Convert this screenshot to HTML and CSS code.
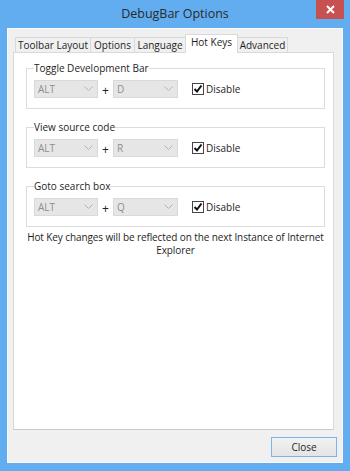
FILE: index.html
```html
<!DOCTYPE html>
<html lang="en">
<head>
  <meta charset="UTF-8">
  <title>DebugBar Options</title>
  <link rel="stylesheet" href="styles.css">
</head>
<body>
<div class="window">
  <div class="titlebar">
    <span></span>
    <div class="title">DebugBar Options</div>
    <div class="close-x">
      <svg width="9" height="9" viewBox="0 0 9 9"><path d="M1 1 L8 8 M8 1 L1 8" stroke="#fff" stroke-width="2"/></svg>
    </div>
  </div>

  <div class="client">
    <div class="tabs">
      <div class="tab t1">Toolbar Layout</div>
      <div class="tab t2">Options</div>
      <div class="tab t3">Language</div>
      <div class="tab t4 active">Hot Keys</div>
      <div class="tab t5">Advanced</div>
    </div>

    <div class="panel">
      <fieldset class="group">
        <legend>Toggle Development Bar</legend>
        <div class="keys">
          <div class="combo">ALT<svg class="chev" width="9" height="6" viewBox="0 0 9 6"><path d="M0.5 0.5 L4.5 4.5 L8.5 0.5" fill="none" stroke="#b4b4b4"/></svg></div>
          <span class="plus">+</span>
          <div class="combo key">D<svg class="chev" width="9" height="6" viewBox="0 0 9 6"><path d="M0.5 0.5 L4.5 4.5 L8.5 0.5" fill="none" stroke="#b4b4b4"/></svg></div>
          <label class="check"><span class="box"><svg width="10" height="10" viewBox="0 0 10 10"><path d="M1.5 5 L4 7.5 L8.5 1.5" fill="none" stroke="#111" stroke-width="2"/></svg></span>Disable</label>
        </div>
      </fieldset>

      <fieldset class="group">
        <legend>View source code</legend>
        <div class="keys">
          <div class="combo">ALT<svg class="chev" width="9" height="6" viewBox="0 0 9 6"><path d="M0.5 0.5 L4.5 4.5 L8.5 0.5" fill="none" stroke="#b4b4b4"/></svg></div>
          <span class="plus">+</span>
          <div class="combo key">R<svg class="chev" width="9" height="6" viewBox="0 0 9 6"><path d="M0.5 0.5 L4.5 4.5 L8.5 0.5" fill="none" stroke="#b4b4b4"/></svg></div>
          <label class="check"><span class="box"><svg width="10" height="10" viewBox="0 0 10 10"><path d="M1.5 5 L4 7.5 L8.5 1.5" fill="none" stroke="#111" stroke-width="2"/></svg></span>Disable</label>
        </div>
      </fieldset>

      <fieldset class="group last">
        <legend>Goto search box</legend>
        <div class="keys">
          <div class="combo">ALT<svg class="chev" width="9" height="6" viewBox="0 0 9 6"><path d="M0.5 0.5 L4.5 4.5 L8.5 0.5" fill="none" stroke="#b4b4b4"/></svg></div>
          <span class="plus">+</span>
          <div class="combo key">Q<svg class="chev" width="9" height="6" viewBox="0 0 9 6"><path d="M0.5 0.5 L4.5 4.5 L8.5 0.5" fill="none" stroke="#b4b4b4"/></svg></div>
          <label class="check"><span class="box"><svg width="10" height="10" viewBox="0 0 10 10"><path d="M1.5 5 L4 7.5 L8.5 1.5" fill="none" stroke="#111" stroke-width="2"/></svg></span>Disable</label>
        </div>
      </fieldset>

      <p class="note">Hot Key changes will be reflected on the next Instance of Internet Explorer</p>
    </div>

    <div class="button-row">
      <button class="close-btn">Close</button>
    </div>
  </div>
</div>
</body>
</html>
```

FILE: styles.css
```css
* {
  box-sizing: border-box;
}
body {
  margin: 0;
  font-family: "Open Sans", "Noto Sans", sans-serif;
  font-size: 10px;
  color: #1e1e1e;
}
.window {
  width: 350px;
  height: 471px;
  background-color: #62adf0;
  padding: 0 7px 8px 7px;
  display: flex;
  flex-direction: column;
}
.titlebar {
  height: 28px;
  display: grid;
  grid-template-columns: 1fr auto 1fr;
}
.title {
  align-self: center;
  font-size: 12.5px;
  color: #2a2a2a;
  margin-top: -1px;
}
.close-x {
  justify-self: end;
  width: 28px;
  height: 19px;
  margin-right: -1px;
  background-color: #c75050;
  display: flex;
  align-items: center;
  justify-content: center;
}
.client {
  flex: 1;
  background-color: #f0f0f0;
  border: 1px solid #f8f8f8;
  padding: 5px 5px 5px 5px;
  display: flex;
  flex-direction: column;
}
.tabs {
  display: flex;
  align-items: flex-end;
  padding-left: 2px;
  margin-bottom: -1px;
  position: relative;
  z-index: 1;
}
.tab {
  height: 15px;
  margin-bottom: 1px;
  margin-left: -1px;
  border: 1px solid #d9d9d9;
  border-bottom: none;
  background-color: #f0f0f0;
  text-align: center;
  line-height: 14px;
  white-space: nowrap;
}
.tab.active {
  height: 19px;
  margin-bottom: 0;
  background-color: #fff;
  line-height: 15px;
}
.t1 { width: 76px; margin-left: 0; }
.t2 { width: 45px; }
.t3 { width: 52px; }
.t4 { width: 53px; }
.t5 { width: 51px; }
.panel {
  flex: 1;
  margin-right: 3px;
  background-color: #fff;
  border: 1px solid #d9d9d9;
  border-bottom-color: #c9c9c9;
  padding: 9px 8px 0 12px;
}
.group {
  margin: 0 0 12px 0;
  border: 1px solid #dcdcdc;
  padding: 4px 7px 9px 7px;
}
.group.last {
  margin-bottom: 4px;
}
.group legend {
  padding: 0;
  line-height: 13px;
}
.keys {
  display: flex;
  align-items: center;
}
.combo {
  width: 64px;
  height: 18px;
  background-color: #e6e6e6;
  border: 1px solid #d9d9d9;
  color: #8e8e8e;
  padding-left: 3px;
  display: flex;
  align-items: center;
  justify-content: space-between;
  padding-right: 4px;
}
.combo.key {
  width: 65px;
}
.plus {
  width: 15px;
  text-align: center;
  font-size: 12px;
  color: #222;
  padding-top: 3px;
}
.check {
  display: flex;
  align-items: center;
  margin-left: 14px;
}
.box {
  width: 12px;
  height: 12px;
  border: 1px solid #444;
  background-color: #fff;
  margin-right: 2px;
  display: flex;
  align-items: center;
  justify-content: center;
}
.note {
  margin: 0 -5px;
  text-align: center;
  line-height: 13px;
  letter-spacing: -0.1px;
}
.button-row {
  display: flex;
  justify-content: flex-end;
  padding-top: 7px;
}
.close-btn {
  width: 66px;
  height: 20px;
  font-family: "Open Sans", "Noto Sans", sans-serif;
  font-size: 10px;
  color: #1e1e1e;
  background: linear-gradient(#f2f2f2, #e4e4e4);
  border: 1px solid #7eb4ea;
  padding: 0;
}
```
